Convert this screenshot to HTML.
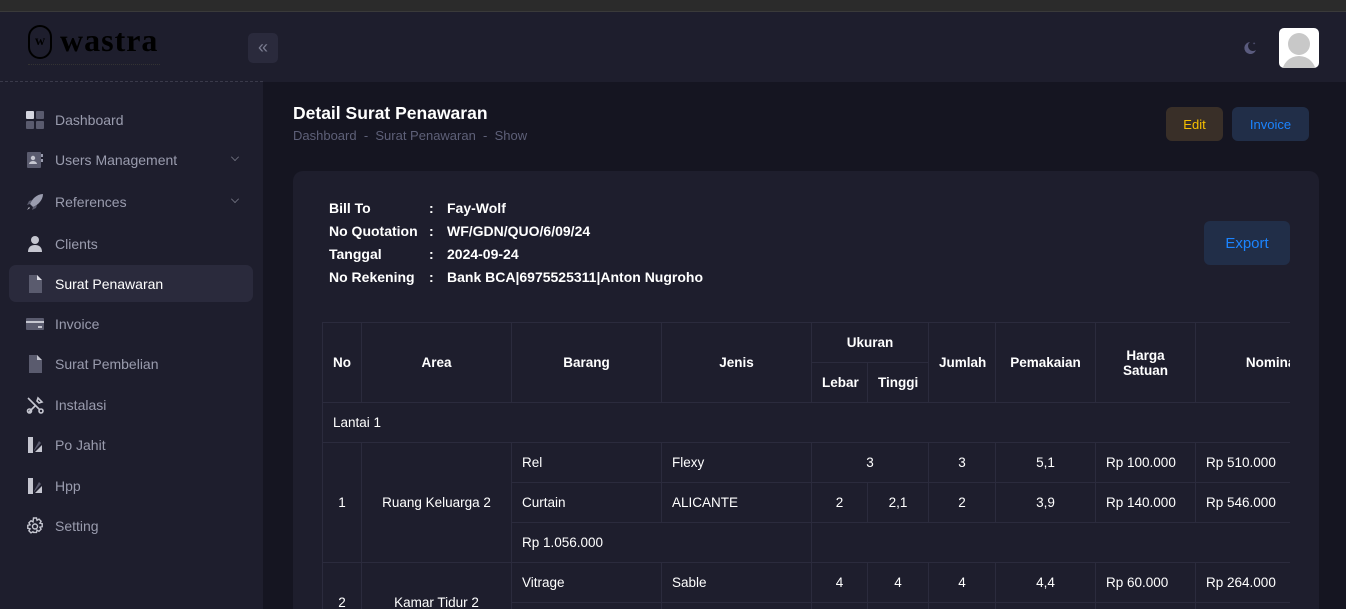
<!DOCTYPE html>
<html style="width:1346px;height:609px;overflow:hidden"><head><meta charset="utf-8"><style>
*{box-sizing:border-box;margin:0;padding:0}
body{width:1346px;height:609px;overflow:hidden;background:#151521;font-family:"Liberation Sans",sans-serif;position:relative;color:#fff}
.top{position:absolute;left:0;top:0;width:1346px;height:12px;background:#2b2b2b;border-bottom:1px solid #3a3a3a}
.side{position:absolute;left:0;top:12px;width:263px;height:597px;background:#1e1e2d}
.hdr{position:absolute;left:263px;top:12px;width:1083px;height:70px;background:#1e1e2d}
.logo{position:absolute;left:0;top:0;width:263px;height:70px;border-bottom:1px dashed #3a3a4a}
.nav{position:absolute;left:9px;width:244px;height:37px;border-radius:7px;font-size:14px;color:#9a9cae;display:flex;align-items:center}
.nav .ic{position:absolute;left:17px;top:10px;width:18px;height:18px}
.nav span{position:absolute;left:46px}
.nav.act{background:#2a2a3c;color:#fff}
.chev{position:absolute;right:14px;top:12px;width:8px;height:8px;border-right:1.5px solid #808290;border-bottom:1.5px solid #808290;transform:rotate(45deg) scale(.7)}
.card{position:absolute;left:293px;top:171px;width:1026px;height:438px;background:#1e1e2d;border-radius:10px 10px 0 0;overflow:hidden}
.btn{position:absolute;border-radius:6px;font-size:13px;display:flex;align-items:center;justify-content:center}
.info{position:absolute;left:36px;top:26px;font-size:14px;font-weight:bold;line-height:23px;color:#fff}
.info div{display:flex}
.info b{display:inline-block;width:100px}
.info i{font-style:normal;width:18px}
.tw{position:absolute;left:29px;top:151px;width:968px;height:287px;overflow:hidden}
table{border-collapse:collapse;table-layout:fixed;width:1027px;font-size:13.5px;color:#fff}
td,th{border:1px solid #2b2b3d;height:40px;padding:0 10px;text-align:center}
th{font-weight:bold;font-size:13.5px}
td.l{text-align:left}
</style></head><body>
<div class="top"></div>
<div class="side">
 <div class="logo">
  <div style="position:absolute;left:28px;top:13px;width:24px;height:34px;border:2px solid #000;border-radius:12px;font:bold 14px 'Liberation Serif',serif;color:#000;text-align:center;line-height:30px">w</div>
  <div style="position:absolute;left:60px;top:10px;font:bold 32px 'Liberation Serif',serif;color:#000;letter-spacing:1px">wastra</div>
  <div style="position:absolute;left:28px;top:52px;width:132px;height:2px;border-top:1px dotted #333"></div>
 </div>
 <div class="nav" style="top:89px"><svg class="ic" viewBox="0 0 18 18"><rect x="0" y="0" width="8" height="8" rx="1" fill="#d5d6e0"/><rect x="10" y="0" width="8" height="8" rx="1" fill="#5a5b6e"/><rect x="0" y="10" width="8" height="8" rx="1" fill="#5a5b6e"/><rect x="10" y="10" width="8" height="8" rx="1" fill="#5a5b6e"/></svg><span>Dashboard</span></div>
 <div class="nav" style="top:129px"><svg class="ic" viewBox="0 0 18 18"><rect x="1" y="1" width="14" height="16" rx="1" fill="#5a5b6e"/><circle cx="7" cy="7" r="2.2" fill="#c5c6d0"/><path d="M3 13a4 3 0 0 1 8 0z" fill="#c5c6d0"/><rect x="15" y="3" width="2" height="3" fill="#9a9cae"/><rect x="15" y="8" width="2" height="3" fill="#9a9cae"/></svg><span>Users Management</span><div class="chev"></div></div>
 <div class="nav" style="top:171px"><svg class="ic" viewBox="0 0 18 18"><path d="M17 1C11 1 6 6 4 11l3 3c5-2 10-7 10-13z" fill="#9a9cae"/><path d="M4 11l-3 1 2-4 3-1zM7 14l-1 3 4-2 1-3z" fill="#5a5b6e"/><path d="M3 14l-2 3 3-2z" fill="#c5c6d0"/></svg><span>References</span><div class="chev"></div></div>
 <div class="nav" style="top:213px"><svg class="ic" viewBox="0 0 18 18"><circle cx="9" cy="5" r="4" fill="#c5c6d0"/><path d="M2 17c0-5 3-7 7-7s7 2 7 7z" fill="#c5c6d0"/></svg><span>Clients</span></div>
 <div class="nav act" style="top:253px"><svg class="ic" viewBox="0 0 18 18"><path d="M3 0h8l5 5v13H3z" fill="#5a5b6e"/><path d="M11 0l5 5h-5z" fill="#e0e0e8"/></svg><span>Surat Penawaran</span></div>
 <div class="nav" style="top:293px"><svg class="ic" viewBox="0 0 18 18"><rect x="0" y="3" width="18" height="12" rx="1" fill="#5a5b6e"/><rect x="0" y="6" width="18" height="2" fill="#c5c6d0"/><rect x="12" y="11" width="4" height="2" fill="#c5c6d0"/></svg><span>Invoice</span></div>
 <div class="nav" style="top:333px"><svg class="ic" viewBox="0 0 18 18"><path d="M3 0h8l5 5v13H3z" fill="#5a5b6e"/><path d="M11 0l5 5h-5z" fill="#c5c6d0"/></svg><span>Surat Pembelian</span></div>
 <div class="nav" style="top:374px"><svg class="ic" viewBox="0 0 18 18" fill="none" stroke="#c5c6d0" stroke-width="1.6"><path d="M2 2l12 12M3 16l7-7M12 2l4 4-3 1-2-2z"/><circle cx="3.5" cy="15" r="2"/><circle cx="15" cy="15" r="2"/></svg><span>Instalasi</span></div>
 <div class="nav" style="top:414px"><svg class="ic" viewBox="0 0 18 18"><rect x="2" y="1" width="5" height="16" fill="#c5c6d0"/><path d="M9 16l7-7v7z" fill="#c5c6d0"/><path d="M8 14l5-9 2 2-7 8z" fill="#5a5b6e"/></svg><span>Po Jahit</span></div>
 <div class="nav" style="top:455px"><svg class="ic" viewBox="0 0 18 18"><rect x="2" y="1" width="5" height="16" fill="#c5c6d0"/><path d="M9 16l7-7v7z" fill="#c5c6d0"/><path d="M8 14l5-9 2 2-7 8z" fill="#5a5b6e"/></svg><span>Hpp</span></div>
 <div class="nav" style="top:495px"><svg class="ic" viewBox="0 0 18 18" fill="none" stroke="#c5c6d0" stroke-width="1.4"><path d="M7.5 1h3l.5 2.3 2-1.2 2.1 2.1-1.2 2 2.3.5v3l-2.3.5 1.2 2-2.1 2.1-2-1.2-.5 2.3h-3L7 14.7l-2 1.2-2.1-2.1 1.2-2L1.8 11.3v-3l2.3-.5-1.2-2L5 3.7l2 1.2z"/><circle cx="9" cy="9.5" r="2.5"/></svg><span>Setting</span></div>
</div>
<div class="hdr">
 <div style="position:absolute;left:-15px;top:21px;width:30px;height:30px;background:#2a2a3c;border-radius:5px;color:#7a7c90;font-size:18px;text-align:center;line-height:28px">«</div>
 <svg style="position:absolute;left:979px;top:28px" width="16" height="16" viewBox="0 0 16 16"><path d="M8 2a6 6 0 1 0 6 8A5 5 0 0 1 8 2z" fill="#5a5b7e"/><path d="M12 2l.5 1 1 .3-1 .3-.5 1-.3-1-1-.3 1-.3z" fill="#5a5b7e"/></svg>
 <div style="position:absolute;left:1016px;top:16px;width:40px;height:40px;background:#fff;border-radius:5px;overflow:hidden"><div style="position:absolute;left:9px;top:5px;width:22px;height:22px;border-radius:50%;background:#c8c8c8"></div><div style="position:absolute;left:3px;top:28px;width:34px;height:20px;border-radius:17px 17px 0 0;background:#c8c8c8"></div></div>
</div>
<div style="position:absolute;left:293px;top:103px;font-size:17.5px;font-weight:bold;color:#fff">Detail Surat Penawaran</div>
<div style="position:absolute;left:293px;top:128px;font-size:13px;color:#5e6078">Dashboard &nbsp;- &nbsp;Surat Penawaran &nbsp;- &nbsp;Show</div>
<div class="btn" style="left:1166px;top:107px;width:57px;height:34px;background:#392f28;color:#f6c000">Edit</div>
<div class="btn" style="left:1232px;top:107px;width:77px;height:34px;background:#212e48;color:#1b84ff">Invoice</div>
<div class="card">
 <div class="info">
  <div><b>Bill To</b><i>:</i>Fay-Wolf</div>
  <div><b>No Quotation</b><i>:</i>WF/GDN/QUO/6/09/24</div>
  <div><b>Tanggal</b><i>:</i>2024-09-24</div>
  <div><b>No Rekening</b><i>:</i>Bank BCA|6975525311|Anton Nugroho</div>
 </div>
 <div class="btn" style="left:911px;top:50px;width:86px;height:44px;background:#212e48;color:#1b84ff;font-size:15px">Export</div>
 <div class="tw"><table>
  <colgroup><col style="width:39px"><col style="width:150px"><col style="width:150px"><col style="width:150px"><col style="width:56px"><col style="width:61px"><col style="width:67px"><col style="width:100px"><col style="width:100px"><col style="width:154px"></colgroup>
  <tr><th rowspan="2" style="height:80px">No</th><th rowspan="2">Area</th><th rowspan="2">Barang</th><th rowspan="2">Jenis</th><th colspan="2">Ukuran</th><th rowspan="2">Jumlah</th><th rowspan="2">Pemakaian</th><th rowspan="2">Harga<br>Satuan</th><th rowspan="2">Nominal</th></tr>
  <tr><th>Lebar</th><th>Tinggi</th></tr>
  <tr><td class="l" colspan="10">Lantai 1</td></tr>
  <tr><td rowspan="3">1</td><td rowspan="3">Ruang Keluarga 2</td><td class="l">Rel</td><td class="l">Flexy</td><td colspan="2">3</td><td>3</td><td>5,1</td><td class="l">Rp 100.000</td><td class="l">Rp 510.000</td></tr>
  <tr><td class="l">Curtain</td><td class="l">ALICANTE</td><td>2</td><td>2,1</td><td>2</td><td>3,9</td><td class="l">Rp 140.000</td><td class="l">Rp 546.000</td></tr>
  <tr><td class="l" colspan="2">Rp 1.056.000</td><td colspan="6"></td></tr>
  <tr><td rowspan="2">2</td><td rowspan="2">Kamar Tidur 2</td><td class="l">Vitrage</td><td class="l">Sable</td><td>4</td><td>4</td><td>4</td><td>4,4</td><td class="l">Rp 60.000</td><td class="l">Rp 264.000</td></tr>
  <tr><td class="l"></td><td></td><td></td><td></td><td></td><td></td><td></td><td></td></tr>
 </table></div>
</div>
</body></html>
